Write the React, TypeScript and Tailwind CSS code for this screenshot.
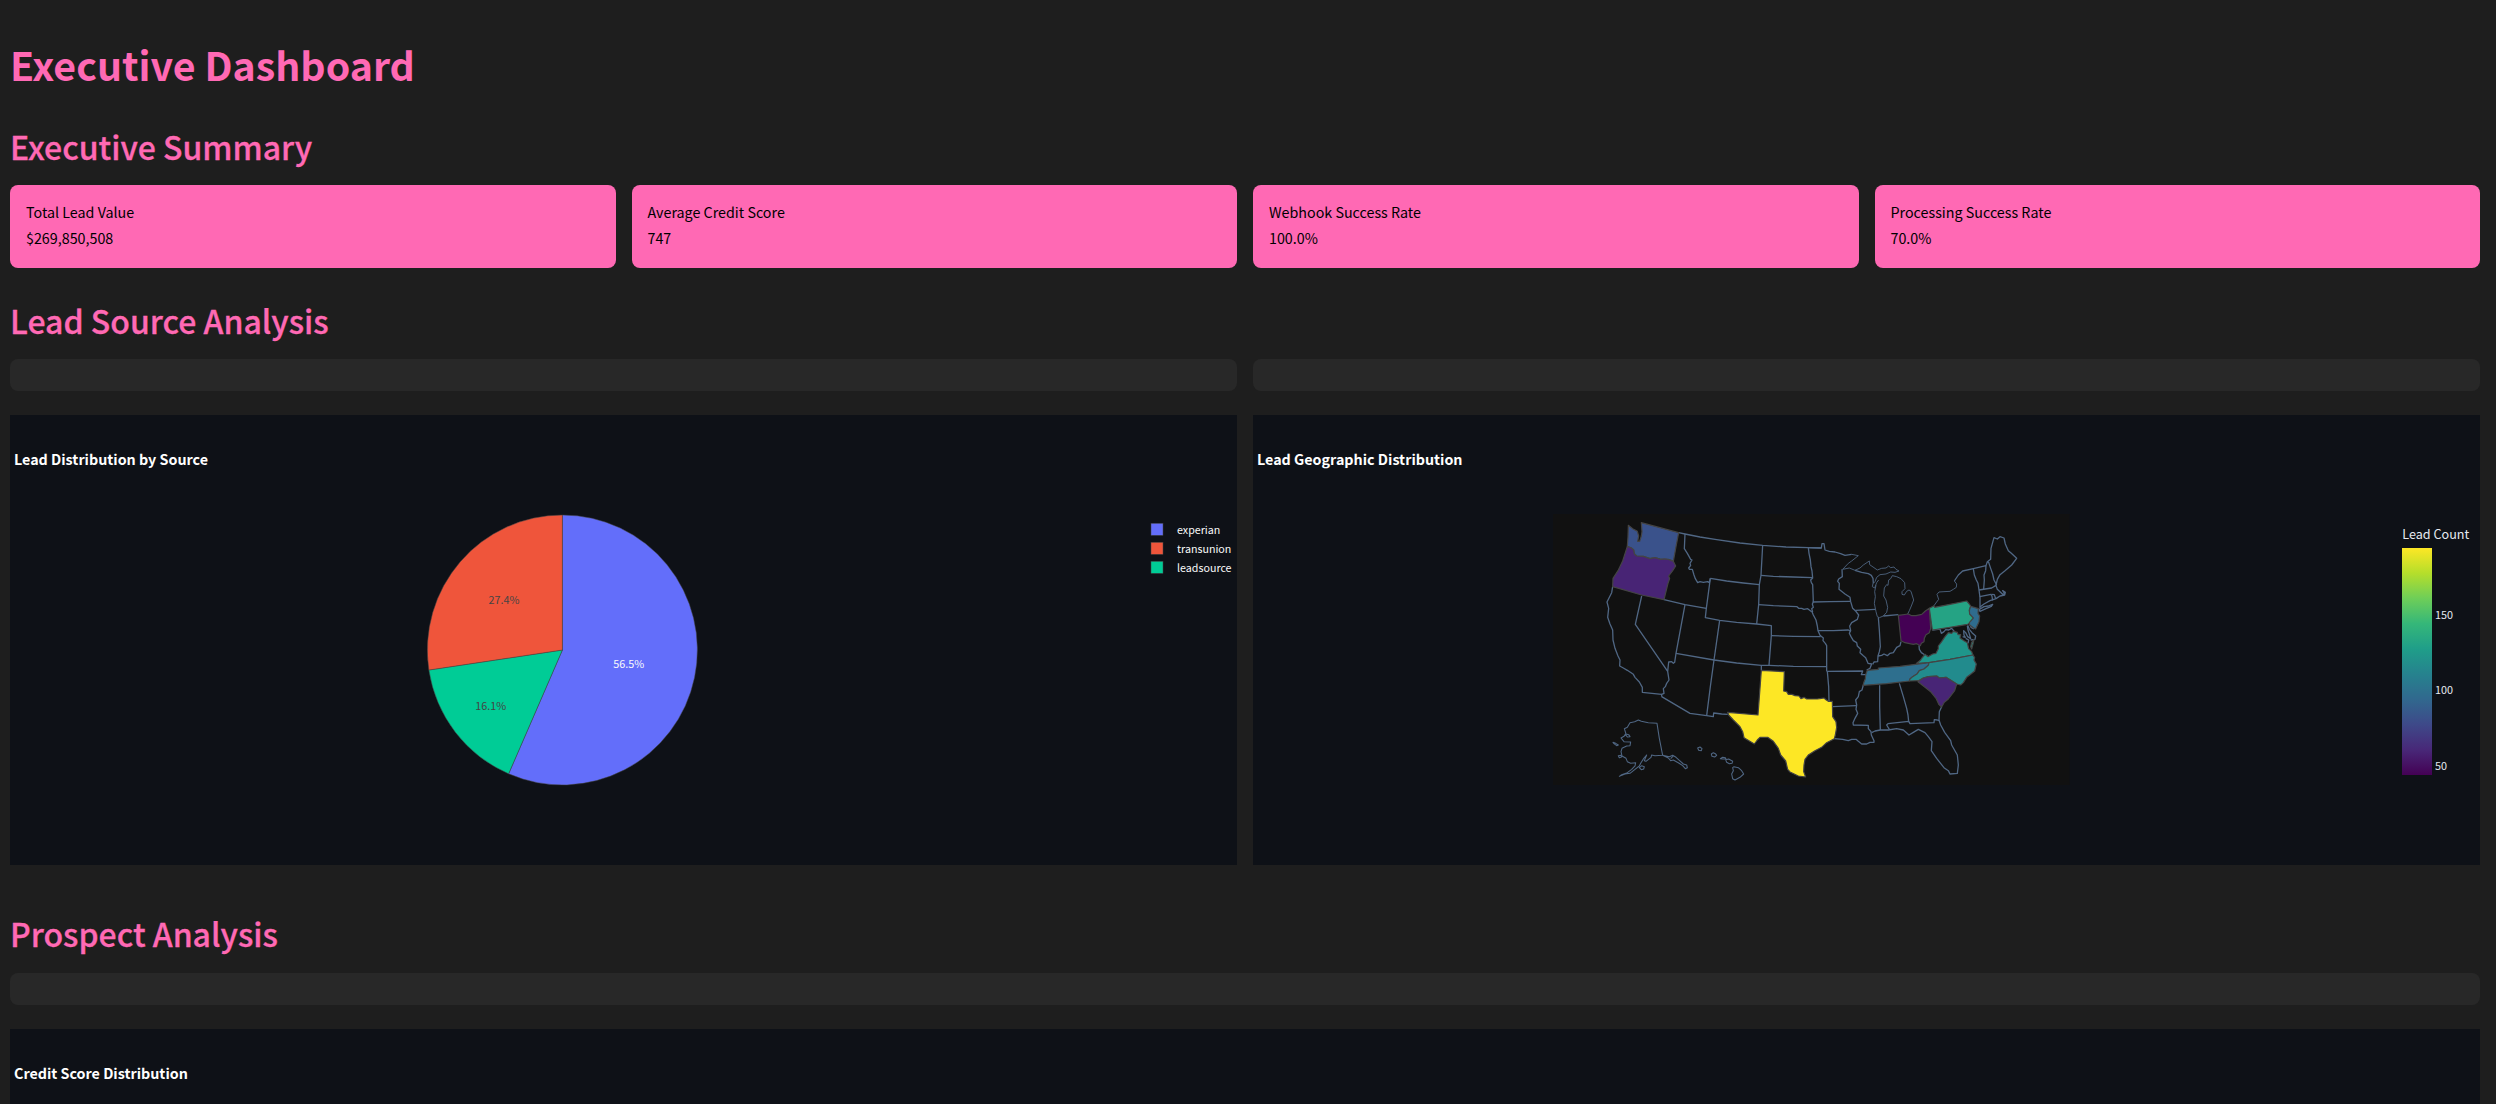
const metrics = [
  { label: "Total Lead Value", value: "$269,850,508" },
  { label: "Average Credit Score", value: "747" },
  { label: "Webhook Success Rate", value: "100.0%" },
  { label: "Processing Success Rate", value: "70.0%" },
];

const legend = [
  { name: "experian", color: "#636efa" },
  { name: "transunion", color: "#ef553b" },
  { name: "leadsource", color: "#00cc96" },
];

// Map outlines: western half, drawn at three units per pixel.
const west = [
  "M416,98 435,102 480,111 530,119 600,129 668,136 738,141 805,143 844,144",
  "M435,102 433,146 442,160 452,178 456,180 450,190 452,196 446,204 448,208 457,208 462,225 466,236 473,248 480,245 490,247 503,245 508,248 511,235",
  "M511,235 560,243 610,249 658,254",
  "M511,235 499,325 496,353 539,361 590,367 650,372 694,377 694,407 687,496",
  "M372,299 435,314 499,325",
  "M668,136 663,226 658,254 656,314 650,372",
  "M663,226 700,229 760,231 817,233",
  "M656,314 700,317 771,320 776,325 785,325 792,328 803,326 815,335",
  "M805,143 807,160 811,180 813,200 816,213 818,234 812,240 814,248 818,254 819,280 820,306 817,312 820,322 815,326 818,336",
  "M694,407 760,409 842,410",
  "M539,361 522,480",
  "M408,460 522,480 590,489 664,496 687,496 760,499 860,500",
  "M435,314 408,460 404,487 400,490 395,485 386,486 383,514 387,540 380,550 376,560 370,566 372,580 365,583 365,590",
  "M305,288 286,373 383,514",
  "M218,260 215,278 207,294 201,306 206,325 203,352 210,372 218,390 219,420 225,445 234,468 240,480 239,498 250,504 262,511 280,523 285,532 298,546 307,562 307,577 365,583",
  "M522,480 511,560 500,647",
  "M365,590 450,640 500,647 520,650 521,639 545,642 563,643",
  "M664,496 664,511",
];

const alaskaHawaii = [
  "M295,660 304,664 325,668 351,670 358,715 368,766 345,767 335,765 333,772 318,784 313,782 320,765 312,774 302,790 298,798 285,808 270,820 255,822 238,829 245,824 262,818 275,808 285,798 287,788 272,790 262,785 258,775 246,768 243,755 246,745 260,738 270,737 272,726 252,725 243,714 252,709 256,703 262,711 270,710 266,704 258,702 253,686 262,682 270,668 284,665Z",
  "M368,766 388,770 398,766 408,772 418,781 430,792 440,795 442,803 436,806 428,797 416,789 400,780 392,782 385,774 368,766",
  "M392,776 400,768",
  "M219,727 227,730 235,735 230,737 222,731Z",
  "M235,767 243,766 246,770 238,773Z",
  "M298,803 305,797 313,800 311,807 304,809Z",
  "M473,744 480,741 486,746 484,752 476,751Z",
  "M514,762 520,758 526,761 530,766 524,771 516,769Z",
  "M541,776 548,772 556,773 558,777 549,777Z",
  "M557,779 566,777 578,784 576,790 568,791 560,787Z",
  "M578,803 582,800 595,803 605,812 611,822 600,832 585,840 578,836 575,822 580,812Z",
];

// Eastern half, in its own coordinate origin.
const east = [
  "M24,143 64,144 66,131 72,131 75,150 88,154 105,156 122,161 135,166 155,163",
  "M38,306 90,305 150,304",
  "M35,333 40,345 48,360 52,378 54,392 60,406 70,414 69,422 76,430 80,437 80,514",
  "M54,392 100,392 145,390 152,394",
  "M80,514 188,513 184,524 198,524",
  "M82,514 86,560 87,603",
  "M97,620 168,617",
  "M126,208 127,230 116,237 113,244 118,250 117,268 135,282 150,292 152,305 158,325 166,332 176,345 172,358 155,368 149,378 152,392 148,400 153,410 160,422 170,428 172,438 182,448 180,458 190,467 197,473 204,490 215,492 210,505 200,510",
  "M166,331 226,328",
  "M165,211 185,217 205,221 214,226 219,235 220,250",
  "M235,352 238,390 241,440 238,455 234,468 233,485 222,486 218,493",
  "M250,348 295,344",
  "M303,425 300,437 290,442 280,458 270,460 262,467 252,462 245,466 234,468",
  "M190,555 186,570 178,575 175,590 167,600 170,615 168,628 173,640 165,655 159,668 160,675 205,676 205,686 213,695 214,705 222,722 222,727 210,727 200,732 185,732 175,724 168,718 155,718 145,722 128,718 103,716",
  "M239,556 239,620 241,690",
  "M298,550 310,590 320,625 324,645 326,665",
  "M268,688 260,675 264,671 326,664 330,671 402,668 403,659 412,660 417,662",
  "M425,620 418,635 417,660 422,675 434,697 452,722 455,735 472,765 475,795 472,820 450,822 445,812 432,803 420,788 410,775 394,752 396,725 385,710 375,698 355,688 340,697 327,705 310,690 290,686 265,690 241,690 225,693 215,698",
  "M357,436 358,448 364,458 375,465 384,470",
  "M520,206 523,225 529,240 534,250 537,270 540,292 540,325",
  "M463,243 475,225 488,213 520,206 558,197 557,212 552,225 553,240 551,267",
  "M558,197 562,185 566,187 572,205 578,222 582,240 590,255",
  "M562,185 572,178 573,145 582,113 592,117 600,110 612,114 616,132 625,152 634,160 650,175 635,195 615,212 600,224 592,238 588,256",
  "M537,270 575,264 588,256 592,268 600,275 608,283 614,281 608,272 616,277 614,285 600,288 588,296 570,302 552,312 540,321",
  "M539,290 573,283 576,289 578,301",
  "M575,283 583,284 587,296",
  "M537,329 552,320 565,318 578,313 574,319 558,326 540,334Z",
  "M397,390 420,387 424,400 432,395 437,389 446,390 455,385 463,394",
  "M503,376 508,388 516,398 527,408 525,418 512,420",
  "M509,373 513,382 522,387",
  "M502,378 504,390 508,402 512,416 503,410 497,398 491,392 492,405 496,412 488,410",
  "M497,415 506,420 504,430",
];

const lakeShores = [
  "M155,163 175,167 155,183 145,190 128,208 148,204 165,211",
  "M165,211 180,204 190,195 208,183 209,194 222,203 232,210 245,205 258,204 266,198 272,203 282,201 288,208 297,213 285,217 272,216 258,222 240,224 230,232 225,245 219,251 217,260 224,264 230,248 236,240",
  "M228,256 224,275 226,290 223,310 228,335 232,350 238,353 250,348 260,337 263,322 258,300 251,288 253,264 260,254 264,256 266,240 272,236 277,227 290,230 303,236 314,248 315,266 306,275 306,283 313,285 320,274 327,270 333,274 341,300 334,318 328,332 323,342",
  "M402,317 410,306 416,298 411,283 417,276 432,275 450,274 460,268 469,262 470,252 463,243",
];

const states = [
  { name: "OH", fill: "#440154", d: "M295,346 325,342 335,347 348,347 365,343 376,333 388,325 392,385 388,398 378,404 373,415 372,425 364,430 361,437 350,431 340,433 325,430 315,428 303,422Z" },
  { name: "PA", fill: "#25a384", d: "M388,325 402,317 404,322 450,313 500,303 507,311 512,318 508,330 510,342 520,352 516,366 503,373 450,382 397,390Z" },
  { name: "NJ", fill: "#2f6c8e", d: "M512,319 535,326 534,340 539,348 537,365 527,387 520,383 509,375 508,368 520,354 509,342 508,332Z" },
  { name: "VA", fill: "#1f968b", d: "M350,490 362,480 366,474 375,463 384,470 398,462 408,460 415,446 415,438 425,425 435,410 445,398 455,400 460,394 472,397 474,404 482,404 480,414 492,422 502,428 506,446 515,455 519,465 450,478 387,488Z" },
  { name: "VA shore", fill: "#1f968b", d: "M522,418 519,432 515,447 512,440 515,428Z" },
  { name: "TN", fill: "#2e6f8e", d: "M202,511 235,508 235,504 300,499 387,488 385,496 372,507 358,512 352,521 338,530 330,537 328,543 260,551 189,556 192,546 196,536 197,524Z" },
  { name: "NC", fill: "#228b8d", d: "M387,488 450,478 519,465 524,473 522,480 529,492 524,513 510,524 500,532 490,548 482,555 470,552 438,532 418,534 410,528 385,530 370,534 355,542 328,543 330,537 338,530 352,521 358,512 372,507 385,496Z" },
  { name: "SC", fill: "#482576", d: "M354,545 370,534 385,530 410,528 418,534 438,532 470,552 464,572 445,597 432,608 425,621 417,614 408,595 392,575 378,564Z" },
];

const westStates = [
  { name: "WA", fill: "#3a528b", d: "M265,76 278,86 292,94 296,108 293,124 299,124 304,108 306,95 304,68 360,83 416,98 408,140 400,184 388,179 375,177 362,178 345,173 330,176 310,169 290,168 283,162 281,150 274,144 262,139 264,110Z" },
  { name: "OR", fill: "#482475", d: "M262,139 274,144 281,150 283,162 290,168 310,169 330,176 345,173 362,178 375,177 388,179 400,184 407,198 398,212 386,228 389,236 384,250 372,299 305,285 218,260 219,235 234,212 248,183Z" },
  { name: "TX", fill: "#fde725", d: "M664,511 733,515 731,573 740,575 745,583 756,583 765,587 777,588 783,596 792,592 800,597 815,597 832,597 845,595 852,594 858,599 865,604 877,604 878,650 888,665 890,682 886,705 883,716 860,728 845,742 825,752 805,765 795,778 792,795 791,815 797,831 775,828 750,816 743,808 737,783 722,765 715,745 700,724 683,712 660,712 652,720 643,732 612,713 608,695 600,680 580,660 566,645 563,637 654,645Z" },
];

function PieChart() {
  const r = 135;
  const parts = [
    { from: 0, to: 0.5652, color: "#636efa" },
    { from: 0.5652, to: 0.7263, color: "#00cc96" },
    { from: 0.7263, to: 1, color: "#ef553b" },
  ];
  const point = (t: number) =>
    `${(r * Math.sin(2 * Math.PI * t)).toFixed(2)},${(-r * Math.cos(2 * Math.PI * t)).toFixed(2)}`;
  return (
    <svg viewBox="0 0 1227 450" className="block h-[450px] w-full" fontFamily="inherit">
      <g transform="translate(552.4 235)" stroke="#444" strokeWidth="0.5">
        {parts.map((p) => (
          <path
            key={p.color}
            fill={p.color}
            d={`M0,0L${point(p.from)}A${r},${r} 0 ${p.to - p.from > 0.5 ? 1 : 0} 1 ${point(p.to)}Z`}
          />
        ))}
      </g>
      <g fontSize="10.8" textAnchor="middle">
        <text x="618.7" y="253" fill="#fafafa">56.5%</text>
        <text x="494" y="189" fill="#444">27.4%</text>
        <text x="480.7" y="295" fill="#444">16.1%</text>
      </g>
      {legend.map((l, i) => (
        <g key={l.name} transform={`translate(1141 ${108 + i * 19})`}>
          <rect y="0.3" width="12" height="12" fill={l.color} stroke="#444" strokeWidth="0.5" />
          <text x="26" y="11" fontSize="10.7" fill="#fafafa">{l.name}</text>
        </g>
      ))}
    </svg>
  );
}

function MapChart() {
  return (
    <svg viewBox="0 0 1227 450" className="block h-[450px] w-full" fontFamily="inherit">
      <defs>
        <linearGradient id="viridis" x1="0" y1="1" x2="0" y2="0">
          <stop offset="0" stopColor="#440154" />
          <stop offset="0.111" stopColor="#482878" />
          <stop offset="0.222" stopColor="#3e4989" />
          <stop offset="0.333" stopColor="#31688e" />
          <stop offset="0.444" stopColor="#26828e" />
          <stop offset="0.556" stopColor="#1f9e89" />
          <stop offset="0.667" stopColor="#35b779" />
          <stop offset="0.778" stopColor="#6ece58" />
          <stop offset="0.889" stopColor="#b5de2b" />
          <stop offset="1" stopColor="#fde725" />
        </linearGradient>
      </defs>
      <rect x="300" y="99" width="516.5" height="271" fill="#111111" />
      <g transform="translate(287 85) scale(0.33333)" fill="none" strokeLinejoin="round">
        <g stroke="#506784" strokeWidth="3.9">
          {west.map((d) => <path key={d} d={d} />)}
          {alaskaHawaii.map((d) => <path key={d} d={d} strokeWidth="3.2" />)}
          <g transform="translate(780 0)">
            {east.map((d) => <path key={d} d={d} />)}
            {lakeShores.map((d) => <path key={d} d={d} strokeWidth="2.6" />)}
          </g>
        </g>
        <g stroke="#444444" strokeWidth="3.6">
          {westStates.map((s) => <path key={s.name} d={s.d} fill={s.fill} />)}
          <g transform="translate(780 0)">
            {states.map((s) => <path key={s.name} d={s.d} fill={s.fill} />)}
          </g>
        </g>
      </g>
      <rect x="1149" y="133" width="30" height="227" fill="url(#viridis)" />
      <g fill="#e6eaf1">
        <text x="1149.3" y="124" fontSize="12.6">Lead Count</text>
        <text x="1182" y="204" fontSize="10.8">150</text>
        <text x="1182" y="279" fontSize="10.8">100</text>
        <text x="1182" y="355" fontSize="10.8">50</text>
      </g>
    </svg>
  );
}

function ChartPanel({ title, children }: { title: string; children?: React.ReactNode }) {
  return (
    <section className="relative h-[450px] bg-[#0e1117]">
      <h3 className="absolute left-1 top-[33px] text-[14.3px] leading-[22px] font-bold text-white">{title}</h3>
      {children}
    </section>
  );
}

function SectionHeading({ children }: { children: React.ReactNode }) {
  return <h2 className="text-[32px] leading-[43px] font-medium [-webkit-text-stroke:0.3px_#ff69b4]">{children}</h2>;
}

export default function App() {
  return (
    <main className="h-screen overflow-hidden bg-[#1e1e1e] pt-[37px] pr-4 pl-2.5 font-['Noto_Sans_CJK_SC',sans-serif] text-[#ff69b4]">
      <h1 className="mb-[35px] text-[39.3px] leading-[53px] font-bold">Executive Dashboard</h1>

      <SectionHeading>Executive Summary</SectionHeading>
      <div className="mt-[17px] mb-[31px] grid grid-cols-4 gap-4">
        {metrics.map((m) => (
          <div key={m.label} className="h-[83px] rounded-lg bg-[#ff69b4] px-4 pt-[14px] text-[14.3px] leading-[25.6px] text-black">
            <p>{m.label}</p>
            <p>{m.value}</p>
          </div>
        ))}
      </div>

      <SectionHeading>Lead Source Analysis</SectionHeading>
      <div className="mt-[17px] mb-[47px] grid grid-cols-2 gap-x-4 gap-y-6">
        <div className="h-8 rounded-lg bg-[#282828]" />
        <div className="h-8 rounded-lg bg-[#282828]" />
        <ChartPanel title="Lead Distribution by Source">
          <PieChart />
        </ChartPanel>
        <ChartPanel title="Lead Geographic Distribution">
          <MapChart />
        </ChartPanel>
      </div>

      <SectionHeading>Prospect Analysis</SectionHeading>
      <div className="mt-[18px] mb-6 h-8 rounded-lg bg-[#282828]" />
      <ChartPanel title="Credit Score Distribution" />
    </main>
  );
}
